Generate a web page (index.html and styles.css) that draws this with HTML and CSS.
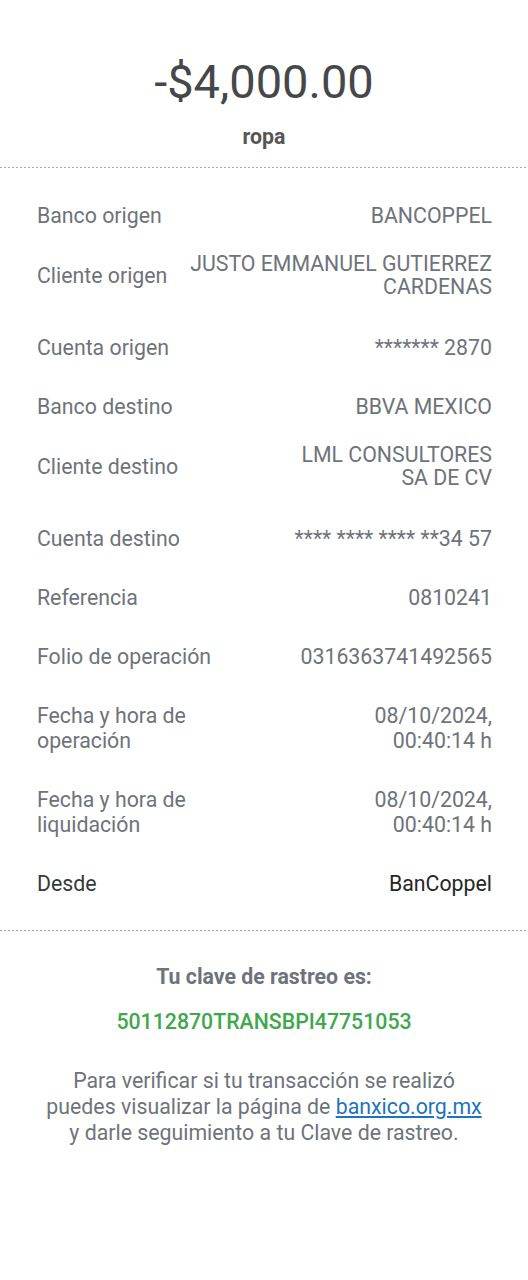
FILE: index.html
```html
<!DOCTYPE html>
<html lang="es">
<head>
  <meta charset="UTF-8">
  <title>Comprobante de transferencia</title>
  <meta name="viewport" content="width=device-width, initial-scale=1.0">
  <link rel="stylesheet" href="styles.css">
</head>
<body>

<div class="receipt">
  <div class="summary">
    <div class="amount">-$4,000.00</div>
    <div class="concept">ropa</div>
  </div>

  <div class="details">
    <div class="row">
      <span class="label">Banco origen</span>
      <span class="value">BANCOPPEL</span>
    </div>
    <div class="row row-wrap">
      <span class="label">Cliente origen</span>
      <span class="value">JUSTO EMMANUEL GUTIERREZ<br>CARDENAS</span>
    </div>
    <div class="row">
      <span class="label">Cuenta origen</span>
      <span class="value">******* 2870</span>
    </div>
    <div class="row">
      <span class="label">Banco destino</span>
      <span class="value">BBVA MEXICO</span>
    </div>
    <div class="row row-wrap">
      <span class="label">Cliente destino</span>
      <span class="value">LML CONSULTORES<br>SA DE CV</span>
    </div>
    <div class="row">
      <span class="label">Cuenta destino</span>
      <span class="value">**** **** **** **34 57</span>
    </div>
    <div class="row">
      <span class="label">Referencia</span>
      <span class="value">0810241</span>
    </div>
    <div class="row">
      <span class="label">Folio de operación</span>
      <span class="value">0316363741492565</span>
    </div>
    <div class="row row-top">
      <span class="label">Fecha y hora de<br>operación</span>
      <span class="value">08/10/2024,<br>00:40:14 h</span>
    </div>
    <div class="row row-top">
      <span class="label">Fecha y hora de<br>liquidación</span>
      <span class="value">08/10/2024,<br>00:40:14 h</span>
    </div>
    <div class="row row-dark">
      <span class="label">Desde</span>
      <span class="value">BanCoppel</span>
    </div>
  </div>

  <div class="tracking">
    <div class="tracking-title">Tu clave de rastreo es:</div>
    <div class="tracking-key">50112870TRANSBPI47751053</div>
    <p class="tracking-note">
      Para verificar si tu transacción se realizó<br>
      puedes visualizar la página de <a href="#">banxico.org.mx</a><br>
      y darle seguimiento a tu Clave de rastreo.
    </p>
  </div>
</div>

</body>
</html>
```

FILE: styles.css
```css
:root {
  --text: #454749;
  --muted: #6e737b;
  --dark: #262626;
  --green: #3ea84b;
  --link: #1e73be;
  --dash: #a9a9a9;
}

body {
  margin: 0;
  background: #fff;
  font-family: Roboto, 'Noto Sans', sans-serif;
}

.receipt {
  width: 528px;
}

.summary {
  padding: 55px 0 19px;
  text-align: center;
  background-image: linear-gradient(to right, var(--dash) 50%, transparent 50%);
  background-size: 4px 1px;
  background-repeat: repeat-x;
  background-position: left bottom;
}

.amount {
  font-size: 47px;
  line-height: 54px;
  color: var(--text);
}

.concept {
  margin-top: 16px;
  font-size: 21.3px;
  line-height: 24px;
  font-weight: 700;
  color: #555;
}

.details {
  padding: 35px 36px 35px 37px;
  background-image: linear-gradient(to right, var(--dash) 50%, transparent 50%);
  background-size: 4px 1px;
  background-repeat: repeat-x;
  background-position: left bottom;
}

.row {
  display: flex;
  justify-content: space-between;
  align-items: center;
  gap: 20px;
  font-size: 21.3px;
  line-height: 25px;
  color: var(--muted);
}

.row + .row {
  margin-top: 34px;
}

.row + .row-wrap {
  margin-top: 24px;
  padding-bottom: 3px;
}

.row-wrap .value {
  line-height: 23px;
}

.row-top {
  align-items: flex-start;
}

.label {
  white-space: nowrap;
}

.value {
  text-align: right;
}

.row-dark {
  color: var(--dark);
}

.row-dark .label {
  color: #383838;
}

.tracking {
  padding-top: 34px;
  text-align: center;
}

.tracking-title {
  font-size: 21.3px;
  line-height: 24px;
  font-weight: 700;
  color: var(--muted);
}

.tracking-key {
  margin-top: 20px;
  font-size: 21.3px;
  line-height: 26px;
  font-weight: 500;
  color: var(--green);
}

.tracking-note {
  margin: 33px 0 0;
  font-size: 21.3px;
  line-height: 26px;
  color: var(--muted);
}

.tracking-note a {
  color: var(--link);
  text-decoration: underline;
}
```
